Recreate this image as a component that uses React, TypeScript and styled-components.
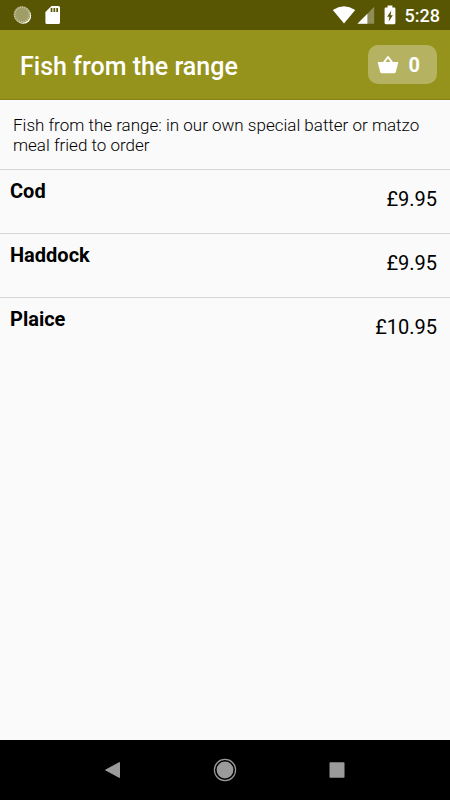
import React from "react";
import styled, { createGlobalStyle } from "styled-components";

const GlobalStyle = createGlobalStyle`
  *, *::before, *::after { box-sizing: border-box; }
  body {
    margin: 0;
    background: #fafafa;
    color: #000;
    font-family: Roboto, "Liberation Sans", sans-serif;
  }
`;

const Screen = styled.div`
  display: flex;
  flex-direction: column;
  min-height: 100vh;
`;

const StatusBar = styled.div`
  display: flex;
  align-items: center;
  justify-content: space-between;
  height: 30px;
  padding: 0 10px 0 13px;
  background: #585602;
  color: #fff;
`;

const StatusGroup = styled.div<{ $gap: number }>`
  display: flex;
  align-items: center;
  gap: ${({ $gap }) => $gap}px;
`;

const Clock = styled.time`
  padding-top: 2px;
  font-size: 18px;
  line-height: 20px;
  font-weight: 500;
`;

const Header = styled.header`
  display: flex;
  align-items: center;
  justify-content: space-between;
  height: 70px;
  padding: 0 13px 0 20px;
  background: #96931d;
  border-bottom: 1px solid #858217;
  color: #fff;
`;

const Title = styled.h1`
  margin: 0;
  padding-top: 4px;
  font-size: 25px;
  line-height: 30px;
  font-weight: 500;
`;

const BasketButton = styled.button`
  display: flex;
  align-items: center;
  gap: 10px;
  height: 39px;
  padding: 0 17px 0 9px;
  border: 0;
  border-radius: 10px;
  background: #b5b361;
  color: #fff;
  font: 700 20px/24px Roboto, "Liberation Sans", sans-serif;
  cursor: pointer;
`;

const Main = styled.main`
  flex: 1;
`;

const Description = styled.p`
  margin: 0;
  padding: 15px 13px 14px;
  font-size: 17px;
  line-height: 20px;
  font-weight: 300;
`;

const ItemList = styled.ul`
  margin: 0;
  padding: 0;
  list-style: none;
`;

const Item = styled.li`
  display: flex;
  align-items: flex-start;
  justify-content: space-between;
  height: 64px;
  padding: 9px 13px 0 10px;
  border-top: 1px solid #d6d6d6;
  font-size: 20px;
  line-height: 24px;
`;

const ItemName = styled.span`
  font-weight: 700;
`;

const ItemPrice = styled.span`
  padding-top: 8px;
`;

const NavBar = styled.nav`
  display: flex;
  align-items: center;
  justify-content: center;
  gap: 64px;
  height: 60px;
  background: #000;
`;

const NavButton = styled.button`
  display: grid;
  place-items: center;
  width: 48px;
  height: 48px;
  padding: 0;
  border: 0;
  background: none;
  color: #9b9b9b;
  cursor: pointer;
`;

const SyncIcon = () => (
  <svg width="19" height="20" viewBox="0 0 19 20" aria-hidden="true">
    <circle cx="10.2" cy="10.8" r="8" fill="#fff" />
    <circle cx="9" cy="9.6" r="8.4" fill="#a09e68" />
    <circle cx="9" cy="9.6" r="7.4" fill="none" stroke="#c9c8a6" strokeWidth="1.6" strokeDasharray="1 1.32" />
  </svg>
);

const SdCardIcon = () => (
  <svg width="16" height="20" viewBox="0 0 16 20" aria-hidden="true">
    <path d="M6.5 1H13.4Q15 1 15 2.6V17.4Q15 19 13.4 19H2Q.4 19 .4 17.4V7Z" fill="#fff" />
    <path d="M5.7 3h1.7v4H5.7zM8.5 3h1.7v4H8.5zM11.3 3H13v4h-1.7z" fill="#585602" />
  </svg>
);

const WifiIcon = () => (
  <svg width="24" height="20" viewBox="0 0 24 20" aria-hidden="true">
    <path d="M.8 4.9Q12 -2.2 23.2 4.9L12 18.4Z" fill="#fff" />
  </svg>
);

const SignalIcon = () => (
  <svg width="18" height="20" viewBox="0 0 18 20" aria-hidden="true">
    <path d="M17.2 1.7V18.7H.5Z" fill="#8f8d55" />
    <path d="M10.4 8.7V18.7H.5Z" fill="#fff" />
  </svg>
);

const BatteryIcon = () => (
  <svg width="12" height="20" viewBox="0 0 12 20" aria-hidden="true">
    <path d="M3.6 .6H8.4V2.6H10.3Q11.4 2.6 11.4 3.7V18.1Q11.4 19.2 10.3 19.2H1.7Q.6 19.2 .6 18.1V3.7Q.6 2.6 1.7 2.6H3.6Z" fill="#fff" />
    <path d="M7.3 5.5L3.1 11.7H5.4L4.7 16.6L8.9 10.2H6.6Z" fill="#585602" />
  </svg>
);

const BasketIcon = () => (
  <svg width="22" height="20" viewBox="0 0 22 20" aria-hidden="true">
    <path d="M6.5 8L11 2L15.5 8" fill="none" stroke="#fff" strokeWidth="2" strokeLinejoin="round" />
    <path d="M1.6 7H20.4Q21.4 7 21.2 8L18.8 17Q18.5 18.2 17.3 18.2H4.7Q3.5 18.2 3.2 17L.8 8Q.6 7 1.6 7Z" fill="#fff" />
  </svg>
);

const BackIcon = () => (
  <svg width="18" height="18" viewBox="0 0 18 18" aria-hidden="true">
    <path d="M15.5 1.5V16.5L1.6 9Z" fill="currentColor" stroke="currentColor" strokeLinejoin="round" />
  </svg>
);

const HomeIcon = () => (
  <svg width="24" height="24" viewBox="0 0 24 24" aria-hidden="true">
    <circle cx="12" cy="12" r="10.6" fill="none" stroke="currentColor" strokeWidth="1.2" />
    <circle cx="12" cy="12" r="8.4" fill="currentColor" />
  </svg>
);

const RecentIcon = () => (
  <svg width="16" height="16" viewBox="0 0 16 16" aria-hidden="true">
    <rect x=".5" y=".2" width="15" height="15.6" rx=".7" fill="currentColor" />
  </svg>
);

const items = [
  { name: "Cod", price: "£9.95" },
  { name: "Haddock", price: "£9.95" },
  { name: "Plaice", price: "£10.95" },
];

export default function App() {
  return (
    <>
      <GlobalStyle />
      <Screen>
        <StatusBar>
          <StatusGroup $gap={13}>
            <SyncIcon />
            <SdCardIcon />
          </StatusGroup>
          <StatusGroup $gap={9}>
            <StatusGroup $gap={1}>
              <WifiIcon />
              <SignalIcon />
            </StatusGroup>
            <BatteryIcon />
            <Clock>5:28</Clock>
          </StatusGroup>
        </StatusBar>
        <Header>
          <Title>Fish from the range</Title>
          <BasketButton type="button" aria-label="Basket, 0 items">
            <BasketIcon />
            0
          </BasketButton>
        </Header>
        <Main>
          <Description>
            Fish from the range: in our own special batter or matzo meal fried to order
          </Description>
          <ItemList>
            {items.map((item) => (
              <Item key={item.name}>
                <ItemName>{item.name}</ItemName>
                <ItemPrice>{item.price}</ItemPrice>
              </Item>
            ))}
          </ItemList>
        </Main>
        <NavBar aria-label="System">
          <NavButton type="button" aria-label="Back"><BackIcon /></NavButton>
          <NavButton type="button" aria-label="Home"><HomeIcon /></NavButton>
          <NavButton type="button" aria-label="Recent apps"><RecentIcon /></NavButton>
        </NavBar>
      </Screen>
    </>
  );
}
